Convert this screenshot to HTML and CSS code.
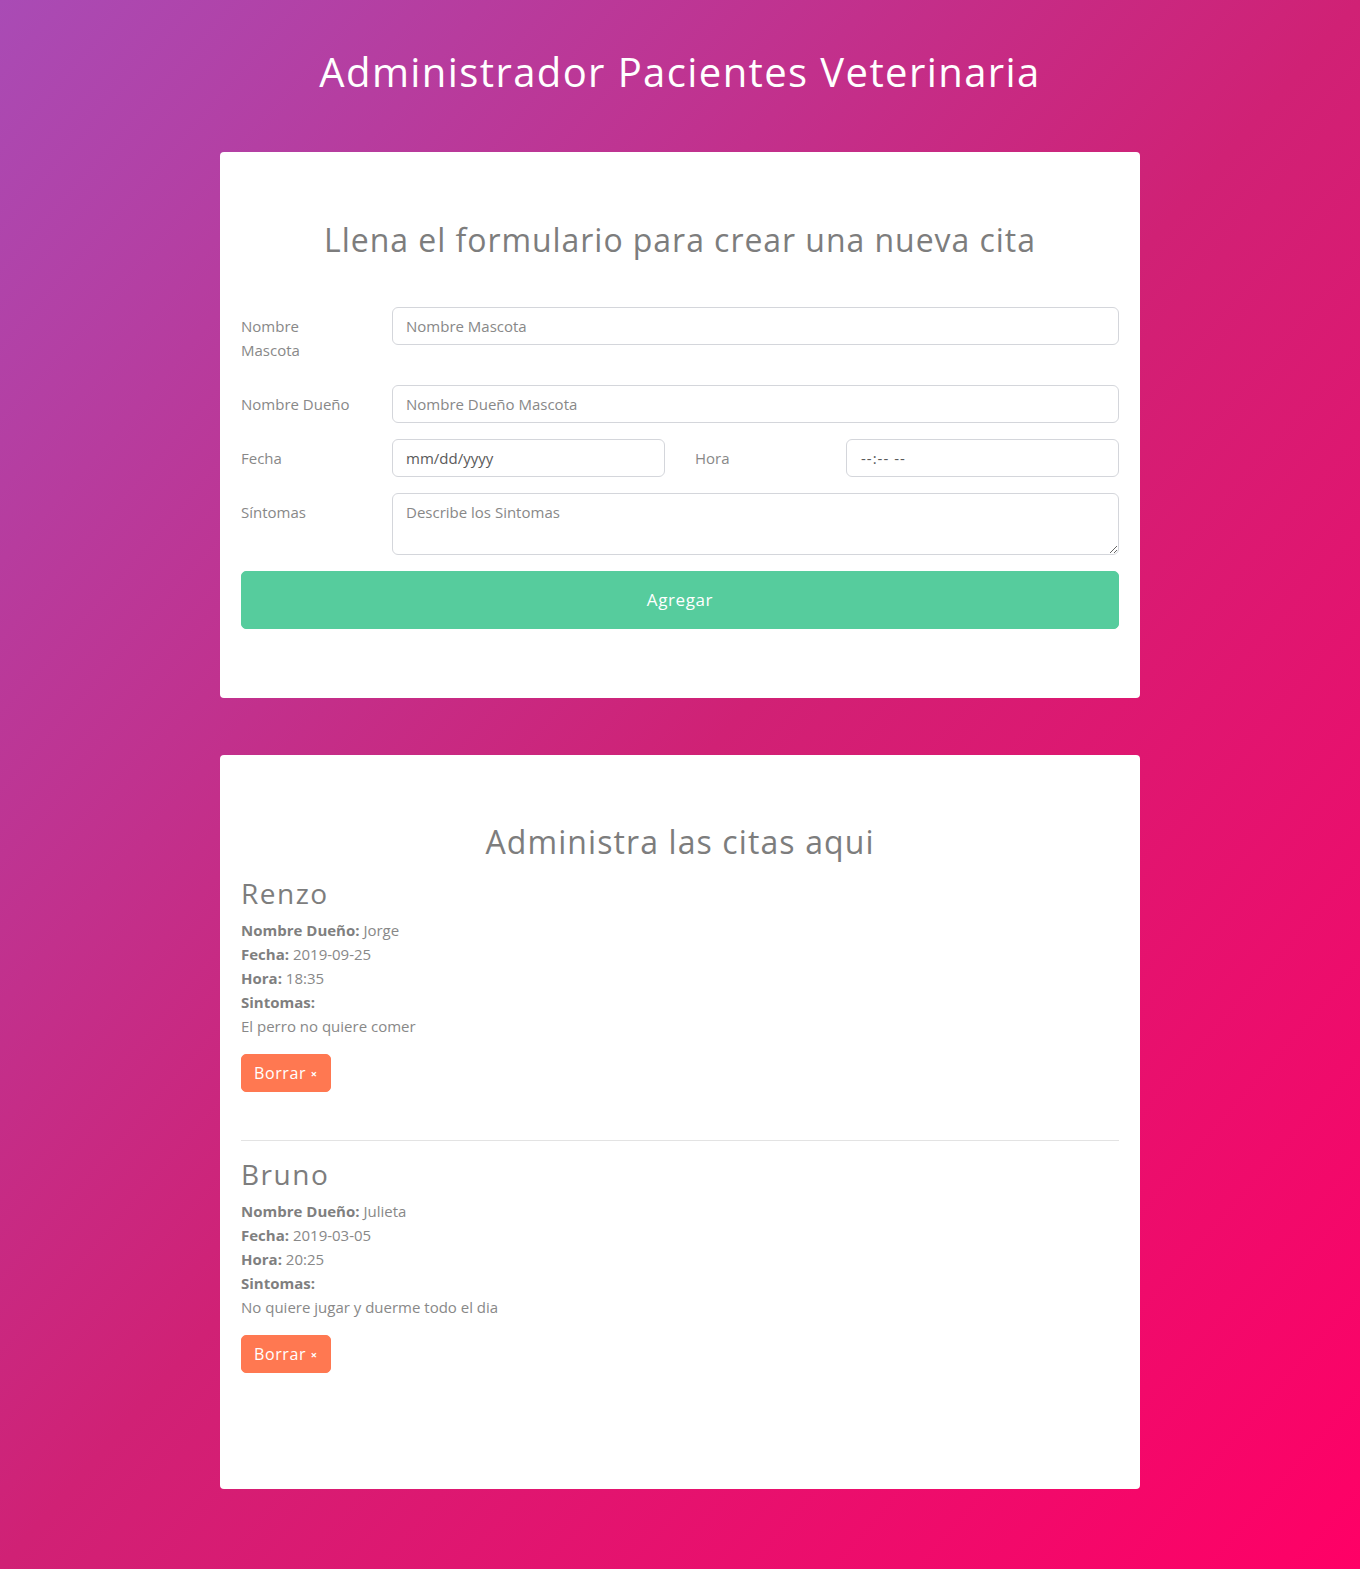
FILE: index.html
```html
<!DOCTYPE html>
<html lang="es">
<head>
<meta charset="utf-8">
<title>Administrador Pacientes Veterinaria</title>
<link rel="stylesheet" href="styles.css">
</head>
<body>
<header class="page-header">
  <h1 class="page-title">Administrador Pacientes Veterinaria</h1>
</header>
<main class="page">
  <section class="card card-form">
    <h2 class="card-title">Llena el formulario para crear una nueva cita</h2>
    <form class="form">
      <div class="form-row">
        <label class="form-label" for="mascota">Nombre Mascota</label>
        <input class="form-control" id="mascota" type="text" placeholder="Nombre Mascota">
      </div>
      <div class="form-row">
        <label class="form-label" for="dueno">Nombre Dueño</label>
        <input class="form-control" id="dueno" type="text" placeholder="Nombre Dueño Mascota">
      </div>
      <div class="form-row form-row-split">
        <label class="form-label" for="fecha">Fecha</label>
        <input class="form-control form-control-value" id="fecha" type="text" value="mm/dd/yyyy">
        <label class="form-label form-label-offset" for="hora">Hora</label>
        <input class="form-control form-control-value form-control-time" id="hora" type="text" value="--:-- --">
      </div>
      <div class="form-row">
        <label class="form-label" for="sintomas">Síntomas</label>
        <textarea class="form-control form-textarea" id="sintomas" placeholder="Describe los Sintomas"></textarea>
      </div>
      <button class="btn btn-success" type="button">Agregar</button>
    </form>
  </section>

  <section class="card card-list">
    <h2 class="card-title card-title-list">Administra las citas aqui</h2>
    <div class="cita">
      <h3 class="cita-name">Renzo</h3>
      <p class="cita-line"><strong>Nombre Dueño:</strong> Jorge</p>
      <p class="cita-line"><strong>Fecha:</strong> 2019-09-25</p>
      <p class="cita-line"><strong>Hora:</strong> 18:35</p>
      <p class="cita-line"><strong>Sintomas:</strong></p>
      <p class="cita-line cita-desc">El perro no quiere comer</p>
      <button class="btn btn-danger" type="button">Borrar <span class="btn-x">&times;</span></button>
    </div>
    <hr class="divider">
    <div class="cita">
      <h3 class="cita-name">Bruno</h3>
      <p class="cita-line"><strong>Nombre Dueño:</strong> Julieta</p>
      <p class="cita-line"><strong>Fecha:</strong> 2019-03-05</p>
      <p class="cita-line"><strong>Hora:</strong> 20:25</p>
      <p class="cita-line"><strong>Sintomas:</strong></p>
      <p class="cita-line cita-desc">No quiere jugar y duerme todo el dia</p>
      <button class="btn btn-danger" type="button">Borrar <span class="btn-x">&times;</span></button>
    </div>
  </section>
</main>
</body>
</html>
```

FILE: styles.css
```css
* { box-sizing: border-box; }

html, body { margin: 0; padding: 0; }

body {
  min-height: 100vh;
  background: linear-gradient(to bottom right, #a94bb5 0%, #d02175 50%, #ff0066 100%);
  font-family: "Open Sans", "Liberation Sans", sans-serif;
  font-size: 16px;
  line-height: 24px;
  color: #888;
}

.page-header { padding-top: 48px; }

.page-title {
  margin: 0 0 8px;
  font-family: "Open Sans", "DejaVu Sans", sans-serif;
  font-weight: 400;
  font-size: 40px;
  line-height: 48px;
  letter-spacing: 1.4px;
  color: #fff;
  text-align: center;
}

.page {
  width: 920px;
  margin: 56px auto 0;
  padding-bottom: 60px;
}

.card {
  background: #fff;
  border-radius: 4px;
  padding: 69px 21px 68px;
}

.card-form { padding-bottom: 69px; }

.btn-success + * { margin: 0; }

.card-list {
  margin-top: 57px;
  padding-top: 68px;
}

.card-title {
  margin: 0 0 48px;
  font-family: "Open Sans", "DejaVu Sans", sans-serif;
  font-weight: 400;
  font-size: 32px;
  line-height: 38px;
  letter-spacing: 0.95px;
  color: #7d7d7d;
  text-align: center;
}

.card-title-list { margin-bottom: 15px; letter-spacing: 1.1px; }

.form-row {
  display: grid;
  grid-template-columns: 151px 1fr;
  align-items: start;
  margin-bottom: 16px;
}

.form-row-split { grid-template-columns: 151px 1fr 181px 1fr; }

.form-label {
  padding: 7px 36px 7px 0;
  font-size: 15px;
  line-height: 24px;
  color: #888;
}

.form-label-offset { padding-left: 30px; }

.form-control {
  display: block;
  width: 100%;
  height: 38px;
  margin: 0;
  padding: 6px 13px;
  border: 1px solid #d4d6db;
  border-radius: 6px;
  background: #fff;
  font-family: "Open Sans", "Liberation Sans", sans-serif;
  font-size: 15px;
  line-height: 24px;
  color: #5a5a5a;
  outline: none;
}

.form-control::placeholder { color: #888; opacity: 1; }

.form-control-value { color: #5a5a5a; }
.form-control-time { padding-left: 14px; letter-spacing: 1px; }

.form-textarea {
  height: 62px;
  resize: vertical;
}

.btn {
  display: inline-block;
  border: 1px solid transparent;
  font-family: "Open Sans", "DejaVu Sans", sans-serif;
  color: #fff;
  cursor: pointer;
}

.btn-success {
  display: block;
  width: 100%;
  height: 58px;
  background: #56cc9d;
  border-color: #56cc9d;
  border-radius: 5px;
  font-size: 17px;
  line-height: 24px;
  letter-spacing: 0.6px;
}

.cita { padding-bottom: 48px; }

.cita-name {
  margin: 0 0 8px;
  font-family: "Open Sans", "DejaVu Sans", sans-serif;
  font-weight: 400;
  font-size: 28px;
  line-height: 34px;
  letter-spacing: 1.5px;
  color: #7d7d7d;
}

.cita-line {
  margin: 0;
  font-size: 15px;
  line-height: 24px;
}

.cita-line strong { font-weight: 700; color: #7f7f7f; }

.cita-desc { margin-bottom: 16px; }

.btn-danger {
  height: 38px;
  padding: 6px 12px;
  background: #ff7851;
  border-color: #ff7851;
  border-radius: 5px;
  font-size: 16px;
  line-height: 24px;
  letter-spacing: 0.6px;
}

.btn-x { font-size: 11px; vertical-align: 1px; font-weight: 700; }

.divider {
  margin: 0 0 16px;
  border: 0;
  border-top: 1px solid #e3e3e3;
}
```
